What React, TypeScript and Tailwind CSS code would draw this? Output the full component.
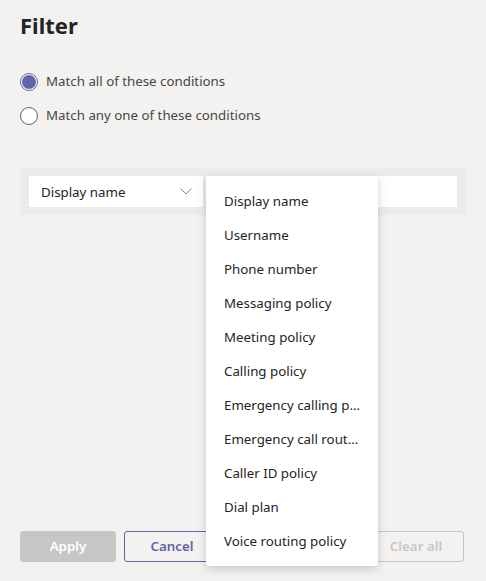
const options = [
  "Display name",
  "Username",
  "Phone number",
  "Messaging policy",
  "Meeting policy",
  "Calling policy",
  "Emergency calling policy",
  "Emergency call routing policy",
  "Caller ID policy",
  "Dial plan",
  "Voice routing policy",
];

export default function App() {
  return (
    <div
      className="relative w-[486px] h-[581px] bg-[#f3f2f1] text-[#252423] overflow-hidden"
      style={{ fontFamily: '"Segoe UI", "Noto Sans", sans-serif' }}
    >
      <div className="px-5 pt-[10px]">
        <h1 className="text-[22px] font-bold leading-[30px] text-[#252423]">Filter</h1>

        {/* Match mode */}
        <div className="mt-[32px] flex flex-col gap-[14px]">
          <label className="flex items-center gap-[8px] h-[20px]">
            <span className="w-[18px] h-[18px] rounded-full border border-[#6264a7] bg-white flex items-center justify-center">
              <span className="w-[14px] h-[14px] rounded-full bg-[#6264a7]" />
            </span>
            <span className="text-[13.3px] text-[#484644]">Match all of these conditions</span>
          </label>
          <label className="flex items-center gap-[8px] h-[20px]">
            <span className="w-[18px] h-[18px] rounded-full border border-[#605e5c] bg-white" />
            <span className="text-[13.3px] text-[#484644]">Match any one of these conditions</span>
          </label>
        </div>

        {/* Condition row */}
        <div className="mt-[42px] h-[47px] bg-[#ebebeb] flex items-center gap-[3px] px-[9px]">
          <div className="w-[174px] h-[31px] bg-white flex items-center justify-between pl-[12px] pr-[11px] pt-[3px]">
            <span className="text-[13.3px] text-[#252423]">Display name</span>
            <svg width="12" height="7" viewBox="0 0 12 7" fill="none" className="-mt-[3px]">
              <path d="M0.5 0.5 L6 6 L11.5 0.5" stroke="#8a8886" strokeWidth="1" />
            </svg>
          </div>
          <div className="flex-1 h-[31px] bg-white" />
        </div>
      </div>

      {/* Footer buttons */}
      <div className="absolute left-5 right-[22px] top-[531px] flex items-center">
        <button className="w-[96px] h-[31px] rounded-[3px] bg-[#c8c6c4] text-white text-[13.3px] font-semibold">
          Apply
        </button>
        <button className="ml-[8px] w-[96px] h-[31px] rounded-[3px] border border-[#6264a7] text-[#6264a7] text-[13.3px] font-semibold">
          Cancel
        </button>
        <button className="ml-auto w-[96px] h-[31px] rounded-[3px] border border-[#c8c6c4] text-[#c8c6c4] text-[13.3px] font-semibold">
          Clear all
        </button>
      </div>

      {/* Dropdown menu */}
      <div className="absolute left-[206px] top-[176px] w-[172px] bg-white pt-[9px] pb-[7px] shadow-[0_3px_10px_rgba(0,0,0,0.18)] rounded-[3px]">
        {options.map((o) => (
          <div
            key={o}
            className="h-[34px] flex items-center pl-[18px] pr-[18px] text-[13.3px] text-[#252423] whitespace-nowrap"
          >
            <span className="block w-full truncate">{o}</span>
          </div>
        ))}
      </div>
    </div>
  );
}
